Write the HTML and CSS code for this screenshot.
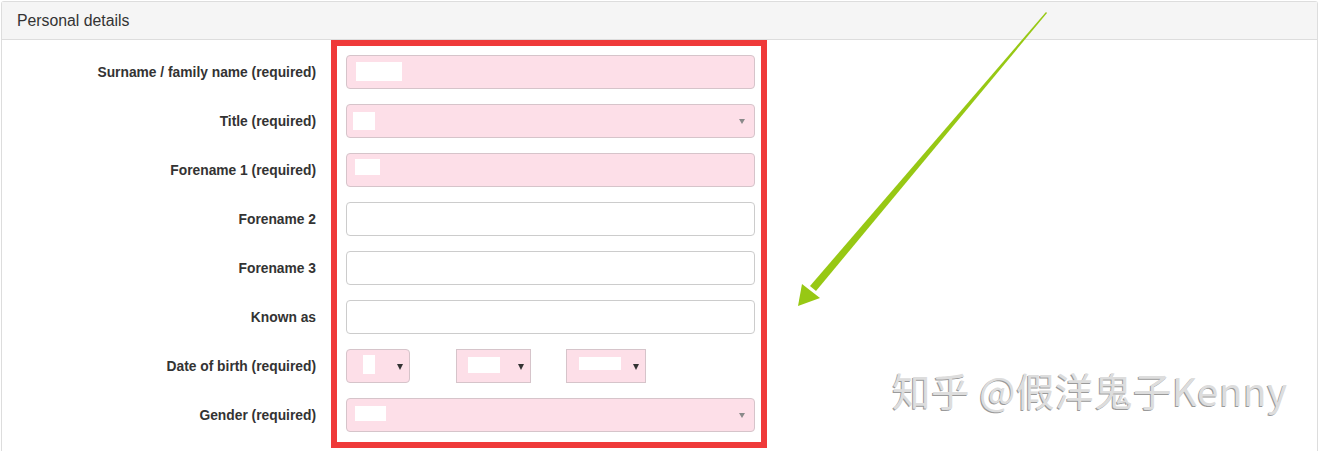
FILE: index.html
```html
<!DOCTYPE html>
<html lang="en">
<head>
<meta charset="utf-8">
<title>Personal details</title>
<link rel="stylesheet" href="styles.css">
</head>
<body>
<div class="panel">
  <div class="panel-heading">Personal details</div>
  <div class="panel-body">
    <div class="row">
      <label class="label">Surname / family name (required)</label>
      <div class="field req"><span class="mask m-surname"></span></div>
    </div>
    <div class="row">
      <label class="label">Title (required)</label>
      <div class="field req select"><span class="mask m-title"></span><span class="caret"></span></div>
    </div>
    <div class="row">
      <label class="label">Forename 1 (required)</label>
      <div class="field req"><span class="mask m-fore"></span></div>
    </div>
    <div class="row">
      <label class="label">Forename 2</label>
      <div class="field"></div>
    </div>
    <div class="row">
      <label class="label">Forename 3</label>
      <div class="field"></div>
    </div>
    <div class="row">
      <label class="label">Known as</label>
      <div class="field"></div>
    </div>
    <div class="row">
      <label class="label">Date of birth (required)</label>
      <div class="dob">
        <div class="dsel d-day"><span class="mask m-day"></span><span class="dcaret"></span></div>
        <div class="dsel d-month"><span class="mask m-month"></span><span class="dcaret"></span></div>
        <div class="dsel d-year"><span class="mask m-year"></span><span class="dcaret"></span></div>
      </div>
    </div>
    <div class="row">
      <label class="label">Gender (required)</label>
      <div class="field req select"><span class="mask m-gender"></span><span class="caret"></span></div>
    </div>
  </div>
</div>

<div class="highlight"></div>

<svg class="arrow" width="1320" height="451" viewBox="0 0 1320 451" xmlns="http://www.w3.org/2000/svg">
  <polygon points="1046,12 1047,13 816,291 810,286" fill="#97c814"/>
  <polygon points="798,306 802,284 820,298" fill="#97c814"/>
</svg>

<div class="watermark">知乎 @假洋鬼子Kenny</div>
</body>
</html>
```

FILE: styles.css
```css
html, body {
  margin: 0;
  padding: 0;
  background: #ffffff;
  overflow: hidden;
}

body {
  width: 1320px;
  height: 451px;
  position: relative;
  font-family: "Liberation Sans", Arial, sans-serif;
  color: #333333;
}

.panel {
  box-sizing: border-box;
  margin: 1px 2px 0 1px;
  border: 1px solid #dddddd;
  border-bottom: none;
  border-radius: 3px 3px 0 0;
  height: 450px;
}

.panel-heading {
  height: 37px;
  background: #f5f5f5;
  border-bottom: 1px solid #dddddd;
  padding-left: 15px;
  font-size: 15.8px;
  line-height: 37px;
  color: #333333;
}

.panel-body {
  padding-top: 15px;
  display: flex;
  flex-direction: column;
  gap: 15px;
}

.row {
  display: grid;
  grid-template-columns: 314px 409px;
  column-gap: 30px;
  align-items: center;
  height: 34px;
}

.label {
  text-align: right;
  font-weight: bold;
  font-size: 13.8px;
  color: #333333;
}

.field {
  position: relative;
  box-sizing: border-box;
  height: 34px;
  border: 1px solid #cccccc;
  border-radius: 4px;
  background: #ffffff;
}

.field.req {
  background: #fddfe8;
  border-color: #d6c4ca;
}

.mask {
  position: absolute;
  background: #ffffff;
}

.m-surname { left: 9px; top: 6px; width: 46px; height: 19px; }
.m-title { left: 6px; top: 7px; width: 22px; height: 18px; }
.m-fore { left: 8px; top: 5px; width: 25px; height: 16px; }
.m-gender { left: 8px; top: 7px; width: 31px; height: 15px; }

.caret {
  position: absolute;
  right: 9px;
  top: 14px;
  width: 0;
  height: 0;
  border-left: 3.5px solid transparent;
  border-right: 3.5px solid transparent;
  border-top: 5px solid #8a8a8a;
}

.dob {
  display: flex;
  height: 34px;
}

.dsel {
  position: relative;
  box-sizing: border-box;
  height: 34px;
  background: #fddfe8;
  border: 1px solid #d6c4ca;
}

.d-day { width: 64px; border-radius: 4px; }
.d-month { width: 75px; margin-left: 46px; }
.d-year { width: 80px; margin-left: 35px; }

.m-day { left: 16px; top: 5px; width: 12px; height: 19px; }
.m-month { left: 11px; top: 7px; width: 32px; height: 16px; }
.m-year { left: 12px; top: 7px; width: 42px; height: 13px; }

.dcaret {
  position: absolute;
  right: 6px;
  top: 14px;
  width: 0;
  height: 0;
  border-left: 3.5px solid transparent;
  border-right: 3.5px solid transparent;
  border-top: 6px solid #333333;
}

.highlight {
  position: absolute;
  left: 331px;
  top: 40px;
  width: 424px;
  height: 396px;
  border: 6px solid #ef3a3a;
}

.arrow {
  position: absolute;
  left: 0;
  top: 0;
  pointer-events: none;
}

.watermark {
  position: absolute;
  left: 892px;
  top: 364px;
  font-family: "Noto Sans CJK SC", "Liberation Sans", sans-serif;
  font-size: 38.5px;
  line-height: 50px;
  color: #dddddd;
  text-shadow: -1px 1px 0 #9a9a9a;
  white-space: nowrap;
  letter-spacing: 0.5px;
}
```
